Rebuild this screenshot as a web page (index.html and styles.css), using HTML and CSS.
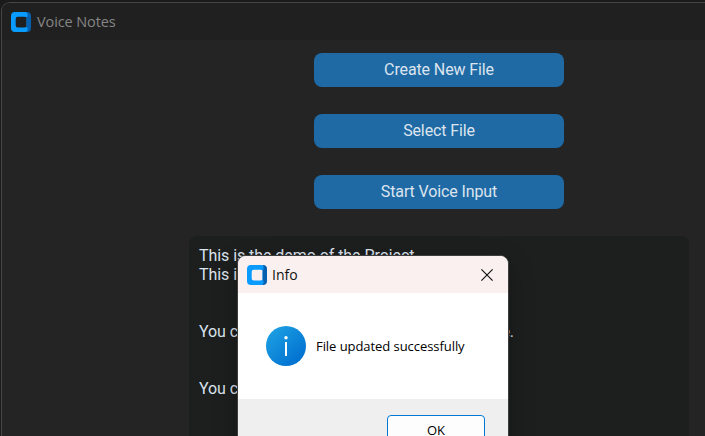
FILE: index.html
```html
<!DOCTYPE html>
<html lang="en">
<head>
<meta charset="utf-8">
<title>Voice Notes</title>
<link rel="stylesheet" href="styles.css">
</head>
<body>
<svg class="defs" width="0" height="0" aria-hidden="true">
  <symbol id="app-icon" viewBox="0 0 20 20">
    <path fill="#0560b0" d="M15.5 0h.5a4 4 0 0 1 4 4v12a4 4 0 0 1-4 4h-1.500l1-5z"/>
    <path fill="#0a9bff" fill-rule="evenodd" d="M4 0h10.500a2 2 0 0 1 2 2v1.500q0 1.500-1.200 2v9q1.200.5 1.200 2V18a2 2 0 0 1-2 2H4a4 4 0 0 1-4-4V4a4 4 0 0 1 4-4zM6.700 4.700a2 2 0 0 0-2 2v6.700a2 2 0 0 0 2 2h6.900a2 2 0 0 0 2-2V6.700a2 2 0 0 0-2-2z"/>
  </symbol>
</svg>
<div class="window">
  <header class="titlebar">
    <svg class="app-icon"><use href="#app-icon"/></svg>
    <span class="title">Voice Notes</span>
  </header>
  <main class="content">
    <button class="action">Create New File</button>
    <button class="action">Select File</button>
    <button class="action">Start Voice Input</button>
    <div class="notes">
      <p>This is the demo of the Project</p>
      <p>This i</p>
      <p></p>
      <p></p>
      <p class="split"><span>You c</span><span>e.</span></p>
      <p></p>
      <p></p>
      <p>You c</p>
    </div>
  </main>
</div>
<section class="dialog">
  <header class="dialog-bar">
    <svg class="app-icon"><use href="#app-icon"/></svg>
    <span class="dialog-title">Info</span>
    <svg class="close" viewBox="0 0 12 12"><path d="M.4.4l11.2 11.2M11.6.4.4 11.6"/></svg>
  </header>
  <div class="dialog-body">
    <svg class="info" viewBox="0 0 40 40">
      <defs><linearGradient id="blue" x1="0.1" y1="0.1" x2="0.85" y2="0.9"><stop offset="0" stop-color="#1d9fe2"/><stop offset="1" stop-color="#0070d0"/></linearGradient></defs>
      <circle cx="20" cy="20" r="20" fill="url(#blue)"/>
      <circle cx="20" cy="11.7" r="1.7" fill="#fff"/>
      <path d="M19 16h2v14h-2z" fill="#fff"/>
    </svg>
    <span class="message">File updated successfully</span>
  </div>
  <footer class="dialog-footer"><button class="ok">OK</button></footer>
</section>
</body>
</html>
```
FILE: styles.css
```css
* { box-sizing: border-box; }
body {
  margin: 0;
  height: 436px;
  overflow: hidden;
  background: #1b1b1b;
  font-family: "Open Sans", "Noto Sans", sans-serif;
}
.defs { position: absolute; }
.window {
  margin: 2px 0 0 1px;
  height: 434px;
  border: solid #464646;
  border-width: 1px 0 0 1px;
  border-top-left-radius: 9px;
  background: #242424;
  overflow: hidden;
}
.titlebar {
  display: flex;
  align-items: center;
  height: 37px;
  padding-left: 9px;
  background: #202020;
}
.app-icon { width: 20px; height: 20px; flex: none; }
.title {
  margin-left: 6px;
  color: #858585;
  font-size: 14.5px;
  letter-spacing: -0.1px;
}
.content {
  display: flex;
  flex-direction: column;
  align-items: center;
  width: 500px;
  margin-left: 187px;
  padding-top: 13px;
}
.action {
  width: 250px;
  height: 34px;
  margin-bottom: 27px;
  padding: 0;
  border: 0;
  border-radius: 8px;
  background: #1f6aa5;
  color: #dce4ee;
  font: 16px/32px Roboto, sans-serif;
  letter-spacing: -0.12px;
}
.notes {
  width: 500px;
  height: 220px;
  padding: 10px;
  border-radius: 8px;
  background: #1d1e1e;
  color: #dce4ee;
  font: 16px/19px Roboto, sans-serif;
  letter-spacing: -0.06px;
}
.notes p { height: 19px; margin: 0; }
.split { display: flex; justify-content: space-between; width: 315px; }
.dialog {
  position: absolute;
  left: 237px;
  top: 255px;
  width: 272px;
  height: 200px;
  border: 1px solid #3d3d3d;
  border-radius: 9px;
  background: #fff;
  box-shadow: 0 8px 24px rgba(0, 0, 0, .28);
  overflow: hidden;
}
.dialog-bar {
  display: flex;
  align-items: center;
  height: 37px;
  padding: 0 15px 0 9px;
  background: #f9f0ef;
}
.dialog-title { margin-left: 5px; font-size: 14px; color: #111; }
.close {
  width: 12px;
  height: 12px;
  margin-left: auto;
  fill: none;
  stroke: #111;
  stroke-width: 1.15;
}
.dialog-body {
  display: flex;
  align-items: center;
  height: 106px;
  padding-left: 28px;
}
.info { width: 40px; height: 40px; }
.message {
  margin-left: 10px;
  color: #000;
  font-size: 13px;
  letter-spacing: -0.06px;
}
.dialog-footer {
  display: flex;
  justify-content: flex-end;
  height: 60px;
  padding: 16px 23px 0 0;
  background: #efefef;
}
.ok {
  width: 98px;
  height: 32px;
  padding: 0 0 1px;
  border: 1px solid #0078d4;
  border-radius: 4px;
  background: #fdfdfd;
  color: #000;
  font: 13px/29px "Open Sans", sans-serif;
}
```
